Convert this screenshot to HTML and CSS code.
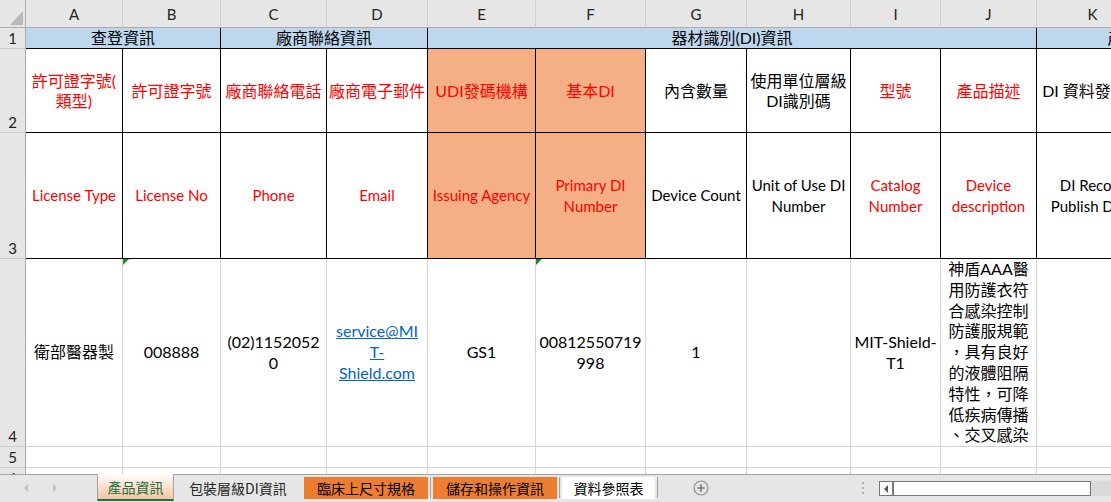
FILE: index.html
```html
<!DOCTYPE html>
<html lang="zh-Hant">
<head>
<meta charset="utf-8">
<title>產品資訊</title>
<link rel="stylesheet" href="styles.css">
</head>
<body>
<div class="app">
  <div class="sheet">
    <div class="grid">
      <!-- column headers -->
      <div class="cell corner"><span class="corner-tri"></span></div>
      <div class="cell colh">A</div>
      <div class="cell colh">B</div>
      <div class="cell colh">C</div>
      <div class="cell colh">D</div>
      <div class="cell colh">E</div>
      <div class="cell colh">F</div>
      <div class="cell colh">G</div>
      <div class="cell colh">H</div>
      <div class="cell colh">I</div>
      <div class="cell colh">J</div>
      <div class="cell colh">K</div>
      <div class="cell colh">L</div>

      <!-- row 1 -->
      <div class="cell rowh">1</div>
      <div class="cell r1 span2">查登資訊</div>
      <div class="cell r1 span2">廠商聯絡資訊</div>
      <div class="cell r1 span6">器材識別(DI)資訊</div>
      <div class="cell r1 span2 r1-shift">產品許可資訊</div>

      <!-- row 2 -->
      <div class="cell rowh">2</div>
      <div class="cell hd red">許可證字號(<br>類型)</div>
      <div class="cell hd red">許可證字號</div>
      <div class="cell hd red">廠商聯絡電話</div>
      <div class="cell hd red">廠商電子郵件</div>
      <div class="cell hd red org">UDI發碼機構</div>
      <div class="cell hd red org">基本DI</div>
      <div class="cell hd">內含數量</div>
      <div class="cell hd">使用單位層級<br>DI識別碼</div>
      <div class="cell hd red">型號</div>
      <div class="cell hd red">產品描述</div>
      <div class="cell hd">DI 資料發布日</div>
      <div class="cell hd"></div>

      <!-- row 3 -->
      <div class="cell rowh">3</div>
      <div class="cell hd en red">License Type</div>
      <div class="cell hd en red">License No</div>
      <div class="cell hd en red">Phone</div>
      <div class="cell hd en red">Email</div>
      <div class="cell hd en red org">Issuing Agency</div>
      <div class="cell hd en red org">Primary DI<br>Number</div>
      <div class="cell hd en">Device Count</div>
      <div class="cell hd en">Unit of Use DI<br>Number</div>
      <div class="cell hd en red">Catalog<br>Number</div>
      <div class="cell hd en red">Device<br>description</div>
      <div class="cell hd en">DI Record<br>Publish Date</div>
      <div class="cell hd en"></div>

      <!-- row 4 -->
      <div class="cell rowh">4</div>
      <div class="cell dt">衛部醫器製</div>
      <div class="cell dt flagged"><span class="flag"></span>008888</div>
      <div class="cell dt">(02)1152052<br>0</div>
      <div class="cell dt"><span class="link">service@MI<br>T-<br>Shield.com</span></div>
      <div class="cell dt">GS1</div>
      <div class="cell dt flagged"><span class="flag"></span>00812550719<br>998</div>
      <div class="cell dt">1</div>
      <div class="cell dt"></div>
      <div class="cell dt">MIT-Shield-<br>T1</div>
      <div class="cell dt">神盾AAA醫<br>用防護衣符<br>合感染控制<br>防護服規範<br>，具有良好<br>的液體阻隔<br>特性，可降<br>低疾病傳播<br>、交叉感染</div>
      <div class="cell dt"></div>
      <div class="cell dt"></div>

      <!-- row 5 -->
      <div class="cell rowh">5</div>
      <div class="cell"></div><div class="cell"></div><div class="cell"></div><div class="cell"></div>
      <div class="cell"></div><div class="cell"></div><div class="cell"></div><div class="cell"></div>
      <div class="cell"></div><div class="cell"></div><div class="cell"></div><div class="cell"></div>

      <!-- row 6 -->
      <div class="cell rowh">6</div>
      <div class="cell"></div><div class="cell"></div><div class="cell"></div><div class="cell"></div>
      <div class="cell"></div><div class="cell"></div><div class="cell"></div><div class="cell"></div>
      <div class="cell"></div><div class="cell"></div><div class="cell"></div><div class="cell"></div>
    </div>
  </div>

  <div class="tabbar">
    <div class="tabnav">
      <span class="arr-left"></span>
      <span class="arr-right"></span>
    </div>
    <div class="tab tab-active">產品資訊</div>
    <div class="tab tab-plain">包裝層級DI資訊</div>
    <div class="tab tab-orange tab-w124">臨床上尺寸規格</div>
    <span class="tabsep"></span>
    <div class="tab tab-orange tab-w124">儲存和操作資訊</div>
    <span class="tabsep"></span>
    <div class="tab tab-white">資料參照表</div>
    <span class="tabsep"></span>
    <div class="addsheet">
      <svg width="16" height="16" viewBox="0 0 16 16" aria-hidden="true">
        <circle cx="8" cy="8" r="7" fill="none" stroke="#8c8c8c" stroke-width="1.2"/>
        <path d="M8 4.2v7.6M4.2 8h7.6" stroke="#7a7a7a" stroke-width="1.6"/>
      </svg>
    </div>
    <div class="tools">
      <svg width="2" height="12" viewBox="0 0 2 12" aria-hidden="true">
        <rect x="0" y="0" width="2" height="2" fill="#b3b3b3"/>
        <rect x="0" y="5" width="2" height="2" fill="#b3b3b3"/>
        <rect x="0" y="10" width="2" height="2" fill="#b3b3b3"/>
      </svg>
    </div>
    <div class="hscroll">
      <div class="hs-btn"><span class="hs-arrow"></span></div>
      <div class="hs-track"></div>
    </div>
    <div class="hs-rest"></div>
  </div>
</div>
</body>
</html>
```

FILE: styles.css
```css
html, body {
  margin: 0;
  padding: 0;
}

body {
  width: 1111px;
  height: 502px;
  overflow: hidden;
  background: #ffffff;
  font-family: Lato, "Noto Sans CJK TC", sans-serif;
  color: #000;
}

.app {
  display: flex;
  flex-direction: column;
  height: 502px;
}

.sheet {
  flex: none;
  height: 474px;
  overflow: hidden;
}

.grid {
  display: grid;
  grid-template-columns: 26px 97px 98px 106px 101px 108px 110px 101px 104px 90px 96px 112px 120px;
  grid-template-rows: 28px 21px 84px 126px 188px 21px 21px;
  width: max-content;
}

.cell {
  box-sizing: border-box;
  display: flex;
  align-items: center;
  justify-content: center;
  text-align: center;
  border-right: 1px solid #d4d4d4;
  border-bottom: 1px solid #d4d4d4;
  white-space: nowrap;
  position: relative;
}

.span2 { grid-column: span 2; }
.span6 { grid-column: span 6; }

.corner {
  background: #e6e6e6;
  border-right-color: #ababab;
  border-bottom-color: #ababab;
  align-items: flex-end;
  justify-content: flex-end;
  padding: 0 2px 2px 0;
}

.corner-tri {
  width: 0;
  height: 0;
  border-left: 13px solid transparent;
  border-bottom: 14px solid #b9b9b9;
}

.colh {
  background: #e6e6e6;
  border-right-color: #d0d0d0;
  border-bottom-color: #ababab;
  font-size: 15px;
  color: #222;
  padding-top: 1px;
}

.rowh {
  background: #e6e6e6;
  border-right-color: #ababab;
  border-bottom-color: #c9c9c9;
  align-items: flex-end;
  font-size: 15px;
  line-height: 18px;
  color: #222;
  padding-bottom: 1px;
}

.r1 {
  background: #bdd7ee;
  border-right-color: #000;
  border-bottom-color: #000;
  font-size: 16px;
  line-height: 20px;
}

.r1-shift {
  padding-left: 6px;
}

.hd {
  border-right-color: #000;
  border-bottom-color: #000;
  font-size: 16px;
  line-height: 20px;
}

.en {
  font-size: 15px;
  line-height: 21px;
}

.red { color: #ff0000; }
.org { background: #f4b084; }

.dt {
  font-size: 16px;
  line-height: 20.8px;
}

.link {
  color: #0563c1;
  text-decoration: underline;
}

.flag {
  position: absolute;
  top: 0;
  left: 0;
  width: 0;
  height: 0;
  border-top: 6px solid #1f8a32;
  border-right: 6px solid transparent;
}

/* ---------- sheet tabs ---------- */
.tabbar {
  flex: none;
  height: 28px;
  box-sizing: border-box;
  display: flex;
  align-items: flex-start;
  background: #e6e6e6;
  border-top: 1px solid #a3a3a3;
  font-family: "Noto Sans CJK TC", sans-serif;
  font-size: 14px;
}

.tabnav {
  width: 97px;
  height: 26px;
  display: flex;
  align-items: center;
  padding-left: 24px;
  gap: 25px;
  box-sizing: border-box;
}

.arr-left {
  width: 0;
  height: 0;
  border-top: 4px solid transparent;
  border-bottom: 4px solid transparent;
  border-right: 4px solid #c2c2c2;
}

.arr-right {
  width: 0;
  height: 0;
  border-top: 4px solid transparent;
  border-bottom: 4px solid transparent;
  border-left: 4px solid #c2c2c2;
}

.tab {
  box-sizing: border-box;
  display: flex;
  align-items: center;
  justify-content: center;
  white-space: nowrap;
  line-height: 1;
}

.tab-active {
  width: 77px;
  height: 27px;
  margin-top: -1px;
  background: linear-gradient(to bottom, #ffffff 0%, #fbe3d2 45%, #f5c4a1 100%);
  border-left: 1px solid #a3a3a3;
  border-right: 1px solid #a3a3a3;
  border-bottom: 2px solid #217346;
  color: #1e6b3c;
  padding-top: 1px;
}

.tab-plain {
  width: 128px;
  height: 22px;
  margin-top: 2px;
  color: #262626;
  margin-right: 2px;
}

.tab-orange {
  height: 22px;
  margin-top: 2px;
  background: #ed7d31;
  color: #000;
}

.tab-w124 { width: 124px; }

.tab-white {
  width: 93px;
  height: 22px;
  margin-top: 2px;
  background: #ffffff;
  color: #000;
}

.tabsep {
  width: 1px;
  height: 21px;
  margin: 2px 2px 0;
  background: #a3a3a3;
}

.addsheet {
  width: 82px;
  height: 26px;
  display: flex;
  align-items: center;
  justify-content: center;
}

.tools {
  width: 137px;
  height: 26px;
  box-sizing: border-box;
  display: flex;
  align-items: center;
  justify-content: flex-end;
  padding-right: 15px;
}

.hscroll {
  width: 212px;
  height: 15px;
  margin-top: 6px;
  box-sizing: border-box;
  border: 1px solid #767676;
  background: #ffffff;
  display: flex;
}

.hs-btn {
  width: 14px;
  box-sizing: border-box;
  border-right: 2px solid #767676;
  display: flex;
  align-items: center;
  justify-content: center;
}

.hs-arrow {
  width: 0;
  height: 0;
  border-top: 4px solid transparent;
  border-bottom: 4px solid transparent;
  border-right: 4px solid #5a5a5a;
}

.hs-track {
  flex: 1;
}

.hs-rest {
  flex: 1;
  height: 15px;
  margin-top: 6px;
  background: #dadada;
}
```
